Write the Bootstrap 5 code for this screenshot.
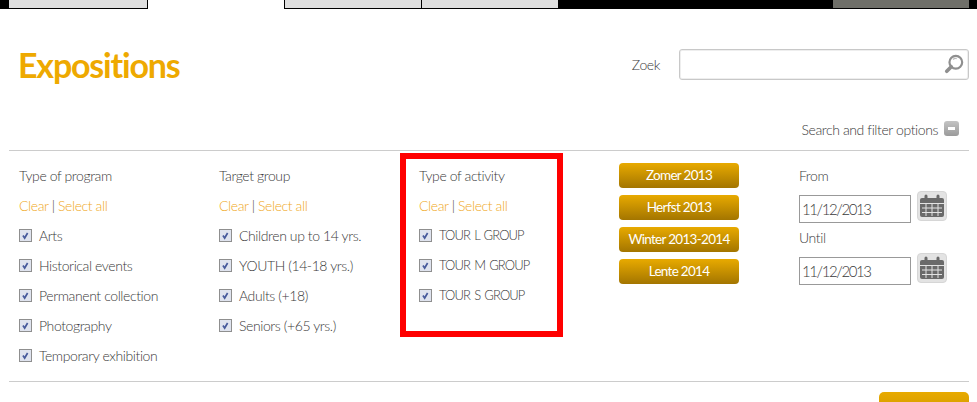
<!DOCTYPE html>
<html lang="en">
<head>
  <meta charset="UTF-8" />
  <meta name="viewport" content="width=device-width, initial-scale=1.0"/>
  <title>Expositions</title>

  <link href="https://cdn.jsdelivr.net/npm/bootstrap@5.3.0/dist/css/bootstrap.min.css" rel="stylesheet">
  <style>
    html, body { height: 402px; overflow: hidden; }
    body {
      background-color: #fff;
      color: #3a3a3a;
      font-family: "Lato", sans-serif;
      font-size: 14px;
      font-weight: 300;
      letter-spacing: -.4px;
      position: relative;
    }
    /* top tabs */
    .top-tabs { height: 9px; background: #000; padding: 0 8px 0 9px; }
    .top-tab { width: 137px; height: 8px; background: #dfdfdf; border-right: 1px solid #000; }
    .top-tab.first { width: 139px; }
    .top-tab.active { height: 9px; background: #fff; }
    .top-tab.dark { margin-left: auto; width: 136px; background: #6f6f69; border-right: 0; }

    .page-head { height: 100px; padding: 40px 8px 0 18px; }
    .page-title { color: #eea900; font-size: 34px; font-weight: 700; letter-spacing: -1.2px; line-height: 32px; margin: 0; }
    .search-label { margin-right: 19px; }
    .search-box { width: 290px; height: 31px; position: relative; }
    .search-box input { width: 100%; height: 100%; border: 1px solid #c8c8c8; border-radius: 3px; outline: 0; box-shadow: inset 0 0 0 1px #eee; }
    .search-box svg { position: absolute; right: 5px; top: 5px; }

    .filter-toggle { height: 41px; padding-right: 18px; line-height: 20px; }
    .minus-box { width: 15px; height: 15px; margin: -2px 0 0 6px; border-radius: 3px; background: linear-gradient(#c4c4c4, #9a9a9a); position: relative; }
    .minus-box::after { content: ""; position: absolute; left: 4px; right: 4px; top: 6px; height: 3px; background: #fff; }

    .filter-panel { margin: 0 8px 0 9px; height: 232px; padding: 10px 0 0 10px; border-top: 1px solid #ccc; border-bottom: 1px solid #ccc; }
    .filter-col { width: 200px; }
    .col-title { height: 30px; line-height: 30px; }
    .col-links { height: 29px; line-height: 30px; }
    .col-links a { color: #f0a823; text-decoration: none; }
    .check-row { height: 30px; }
    .check-row .form-check-input {
      width: 13px; height: 13px; margin: 0 7px 0 0; flex: none;
      border: 1px solid #8f8f8f; border-radius: 0;
      background-color: #dfe3ee;
      background-image: url("data:image/svg+xml,%3csvg xmlns='http://www.w3.org/2000/svg' viewBox='0 0 13 13'%3e%3cpath fill='none' stroke='%23475a9c' stroke-width='2' d='M3.500 6.500l2 3 3.500-6'/%3e%3c/svg%3e");
      background-size: 100% 100%;
    }
    .check-row label { margin: 0; }
    .caps-label { font-size: 13px; letter-spacing: -.9px; word-spacing: 1.500px; padding-top: 2px; }

    .season-col { width: 180px; padding-top: 2px; }
    .season-btn {
      width: 120px; height: 25px; padding: 0; margin-bottom: 7px; display: block;
      font-size: 13.5px; letter-spacing: -.7px; line-height: 23px; color: #fff; border: 0; border-radius: 4px;
      background: linear-gradient(#e8aa00, #a37500);
    }
    .date-label { height: 30px; line-height: 30px; }
    .date-row { height: 32px; }
    .date-input { width: 112px; height: 28px; border: 1px solid #999; border-radius: 0; padding: 0 2px; font-size: 15px; font-weight: 300; letter-spacing: -1.400px; color: #3a3a3a; font-family: inherit; outline: 0; margin-top: 4px; }
    .cal-btn { width: 30px; height: 30px; margin-left: 6px; background: #e3e3e3; border: 1px solid #d6d6d6; border-radius: 4px; padding: 0; }

    .apply-row { padding: 10px 8px 0 0; }
    .apply-btn { width: 90px; height: 30px; border: 0; border-radius: 5px 5px 0 0; background: linear-gradient(#e8aa00, #c99300); }

    /* red highlight drawn on top of the screenshot */
    .red-frame { position: absolute; left: 400px; top: 153px; width: 163px; height: 184px; border: 6px solid #f00; pointer-events: none; }
  </style>
</head>
<body>
  <!-- Tabs -->
  <div class="top-tabs d-flex">
    <div class="top-tab first"></div>
    <div class="top-tab active"></div>
    <div class="top-tab"></div>
    <div class="top-tab"></div>
    <div class="top-tab dark"></div>
  </div>

  <!-- Title and search -->
  <div class="page-head d-flex justify-content-between align-items-start">
    <h1 class="page-title">Expositions</h1>
    <div class="d-flex align-items-center">
      <span class="search-label">Zoek</span>
      <div class="search-box">
        <input type="text" aria-label="Zoek">
        <svg width="20" height="20" viewBox="0 0 22 22"><circle cx="13" cy="9" r="7" fill="#fff" stroke="#8f8f8f" stroke-width="2.400"/><path d="M8 14l-5 5" stroke="#8f8f8f" stroke-width="4" stroke-linecap="round"/><path d="M10 6a4 4 0 0 1 4-1" fill="none" stroke="#bbb" stroke-width="1.500"/></svg>
      </div>
    </div>
  </div>

  <div class="filter-toggle d-flex justify-content-end align-items-center">
    <span>Search and filter options</span>
    <span class="minus-box"></span>
  </div>

  <!-- Filters -->
  <div class="filter-panel d-flex">
    <div class="filter-col">
      <div class="col-title">Type of program</div>
      <div class="col-links"><a href="#">Clear</a> | <a href="#">Select all</a></div>
      <div class="check-row d-flex align-items-center"><input class="form-check-input" type="checkbox" id="p1" checked><label for="p1">Arts</label></div>
      <div class="check-row d-flex align-items-center"><input class="form-check-input" type="checkbox" id="p2" checked><label for="p2">Historical events</label></div>
      <div class="check-row d-flex align-items-center"><input class="form-check-input" type="checkbox" id="p3" checked><label for="p3">Permanent collection</label></div>
      <div class="check-row d-flex align-items-center"><input class="form-check-input" type="checkbox" id="p4" checked><label for="p4">Photography</label></div>
      <div class="check-row d-flex align-items-center"><input class="form-check-input" type="checkbox" id="p5" checked><label for="p5">Temporary exhibition</label></div>
    </div>
    <div class="filter-col">
      <div class="col-title">Target group</div>
      <div class="col-links"><a href="#">Clear</a> | <a href="#">Select all</a></div>
      <div class="check-row d-flex align-items-center"><input class="form-check-input" type="checkbox" id="t1" checked><label for="t1">Children up to 14 yrs.</label></div>
      <div class="check-row d-flex align-items-center"><input class="form-check-input" type="checkbox" id="t2" checked><label for="t2">YOUTH (14-18 yrs.)</label></div>
      <div class="check-row d-flex align-items-center"><input class="form-check-input" type="checkbox" id="t3" checked><label for="t3">Adults (+18)</label></div>
      <div class="check-row d-flex align-items-center"><input class="form-check-input" type="checkbox" id="t4" checked><label for="t4">Seniors (+65 yrs.)</label></div>
    </div>
    <div class="filter-col">
      <div class="col-title">Type of activity</div>
      <div class="col-links"><a href="#">Clear</a> | <a href="#">Select all</a></div>
      <div class="check-row d-flex align-items-center"><input class="form-check-input" type="checkbox" id="a1" checked><label class="caps-label" for="a1">TOUR L GROUP</label></div>
      <div class="check-row d-flex align-items-center"><input class="form-check-input" type="checkbox" id="a2" checked><label class="caps-label" for="a2">TOUR M GROUP</label></div>
      <div class="check-row d-flex align-items-center"><input class="form-check-input" type="checkbox" id="a3" checked><label class="caps-label" for="a3">TOUR S GROUP</label></div>
    </div>
    <div class="season-col">
      <button class="btn season-btn" type="button">Zomer 2013</button>
      <button class="btn season-btn" type="button">Herfst 2013</button>
      <button class="btn season-btn" type="button">Winter 2013-2014</button>
      <button class="btn season-btn" type="button">Lente 2014</button>
    </div>
    <div>
      <div class="date-label">From</div>
      <div class="date-row d-flex align-items-start">
        <input class="date-input" type="text" value="11/12/2013" aria-label="From">
        <button class="cal-btn" type="button" aria-label="Pick date">
          <svg width="28" height="26" viewBox="0 0 28 26"><rect x="2" y="5" width="24" height="19" rx="2" fill="#6a6a6a"/><path stroke="#6a6a6a" stroke-width="3" stroke-linecap="round" d="M8 3v3M20 3v3"/><path stroke="#e3e3e3" d="M2 10.500h24M4 15h20M4 19.500h20M8 11v12M14 11v12M20 11v12"/></svg>
        </button>
      </div>
      <div class="date-label">Until</div>
      <div class="date-row d-flex align-items-start">
        <input class="date-input" type="text" value="11/12/2013" aria-label="Until">
        <button class="cal-btn" type="button" aria-label="Pick date">
          <svg width="28" height="26" viewBox="0 0 28 26"><rect x="2" y="5" width="24" height="19" rx="2" fill="#6a6a6a"/><path stroke="#6a6a6a" stroke-width="3" stroke-linecap="round" d="M8 3v3M20 3v3"/><path stroke="#e3e3e3" d="M2 10.500h24M4 15h20M4 19.500h20M8 11v12M14 11v12M20 11v12"/></svg>
        </button>
      </div>
    </div>
  </div>

  <div class="apply-row d-flex justify-content-end">
    <button class="apply-btn" type="button" aria-label="Apply"></button>
  </div>

  <div class="red-frame"></div>

  <script src="https://cdn.jsdelivr.net/npm/bootstrap@5.3.0/dist/js/bootstrap.bundle.min.js"></script>
</body>
</html>
